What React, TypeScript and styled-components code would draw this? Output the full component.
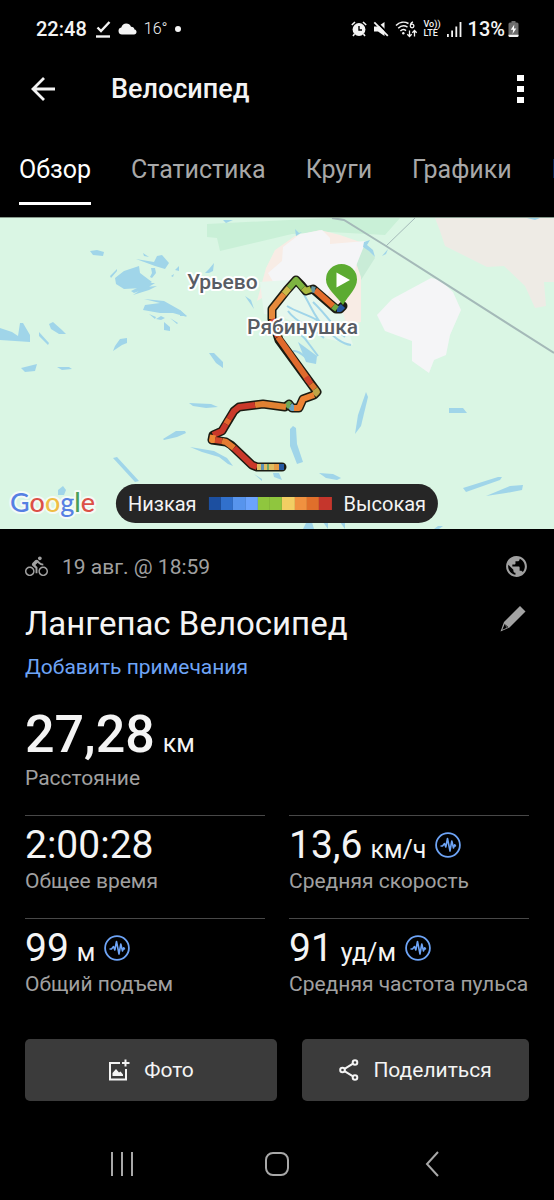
import React from "react";
import styled, { createGlobalStyle } from "styled-components";
import { MdDirectionsBike, MdPublic } from "react-icons/md";

const GlobalStyle = createGlobalStyle`
  *, *::before, *::after { box-sizing: border-box; }
  body {
    margin: 0;
    background: #000;
    color: #f4f4f4;
    font-family: Roboto, "Noto Sans", sans-serif;
  }
  h1, h2, p, dl, dd, dt { margin: 0; font-weight: 400; }
  button {
    border: 0;
    padding: 0;
    background: none;
    color: inherit;
    font: inherit;
    cursor: pointer;
  }
  svg { display: block; flex: none; }
`;

const Page = styled.div`
  display: flex;
  flex-direction: column;
  min-height: 100vh;
  overflow-x: hidden;
`;

/* ---------- status bar ---------- */

const StatusBar = styled.div`
  display: flex;
  justify-content: space-between;
  align-items: center;
  height: 58px;
  padding: 0 35px 0 36px;
`;

const StatusGroup = styled.div<{ $gap: number }>`
  display: flex;
  align-items: center;
  gap: ${(p) => p.$gap}px;
`;

const StatusText = styled.span`
  font-size: 20px;
  line-height: 24px;
  font-weight: 500;
`;

const Temperature = styled.span`
  font-size: 16px;
  line-height: 24px;
  font-weight: 300;
`;

const Dot = styled.span`
  width: 6px;
  height: 6px;
  border-radius: 50%;
  background: #f4f4f4;
`;

const Volte = styled.span`
  display: flex;
  flex-direction: column;
  font-size: 9px;
  line-height: 9px;
  font-weight: 500;
`;

const Charge = styled.span`
  display: flex;
  align-items: center;
  gap: 3px;
`;

/* ---------- header and tabs ---------- */

const AppBar = styled.header`
  display: flex;
  align-items: center;
  height: 62px;
  padding: 0 30px;
`;

const BackButton = styled.button`
  width: 81px;
`;

const AppTitle = styled.h1`
  flex: 1;
  font-size: 27px;
  line-height: 32px;
  font-weight: 500;
`;

const Tabs = styled.nav`
  display: flex;
  gap: 40px;
  height: 97px;
  padding: 35px 0 12px 19px;
  overflow: hidden;
`;

const Tab = styled.button<{ $active?: boolean }>`
  flex: none;
  padding-bottom: 17px;
  border-bottom: 3px solid ${(p) => (p.$active ? "#fff" : "transparent")};
  color: ${(p) => (p.$active ? "#fff" : "#a8a8a8")};
  font-size: 25px;
  line-height: 30px;
`;

/* ---------- map ---------- */

const MapPanel = styled.section`
  position: relative;
  height: 312px;
  border-top: 1px solid #87998c;
  background: #daf6e4;
  overflow: hidden;
`;

const MapDrawing = styled.svg`
  width: 100%;
  height: 100%;
`;

const PlaceName = styled.text`
  fill: #585c64;
  stroke: #fff;
  stroke-width: 4px;
  stroke-linejoin: round;
  paint-order: stroke;
  font-size: 21px;
  font-weight: 500;
`;

const GoogleMark = styled.text`
  stroke: #f4fbf6;
  stroke-width: 4px;
  stroke-linejoin: round;
  paint-order: stroke;
  font-family: Lato, Roboto, sans-serif;
  font-size: 27px;
  font-weight: 500;
`;

const Legend = styled.div`
  position: absolute;
  bottom: 6px;
  left: 50%;
  transform: translateX(-50%);
  display: flex;
  align-items: center;
  gap: 12px;
  height: 39px;
  padding: 0 12px;
  border-radius: 20px;
  background: #262626;
  font-size: 20px;
  line-height: 24px;
`;

const Scale = styled.div`
  display: flex;
  width: 123px;
  height: 13px;
`;

const Swatch = styled.span<{ $color: string }>`
  flex: 1;
  background: ${(p) => p.$color};
`;

/* ---------- activity details ---------- */

const Details = styled.main`
  padding: 0 25px;
`;

const MetaRow = styled.div`
  display: flex;
  align-items: center;
  gap: 14px;
  height: 75px;
  color: #a0a0a0;
  font-size: 21px;
  line-height: 24px;
`;

const MetaDate = styled.span`
  flex: 1;
`;

const TitleRow = styled.div`
  display: flex;
  justify-content: space-between;
  align-items: flex-start;
`;

const ActivityName = styled.h2`
  font-size: 33px;
  line-height: 40px;
`;

const NotesLink = styled.a`
  display: block;
  margin-top: 9px;
  color: #6ea4f6;
  font-size: 21px;
  line-height: 28px;
  text-decoration: none;
`;

const Distance = styled.dl`
  margin-top: 24px;
`;

const Stats = styled.dl`
  display: grid;
  grid-template-columns: 1fr 1fr;
  gap: 24px;
  margin-top: 24px;
`;

const Stat = styled.div`
  display: flex;
  flex-direction: column;
  min-width: 0;
  padding-top: 6px;
  border-top: 1px solid #484848;
`;

const StatLine = styled.dd`
  display: flex;
  align-items: center;
  gap: 9px;
  height: 46px;
`;

const Value = styled.span<{ $large?: boolean }>`
  font-size: ${(p) => (p.$large ? 52 : 39)}px;
  line-height: ${(p) => (p.$large ? 60 : 46)}px;
  font-weight: ${(p) => (p.$large ? 500 : 400)};
`;

const Unit = styled.span`
  margin-left: 8px;
  font-size: 25px;
  line-height: 32px;
  font-weight: 400;
`;

const Label = styled.dt`
  color: #a0a0a0;
  font-size: 21px;
  line-height: 26px;
  white-space: nowrap;
`;

const Actions = styled.div`
  display: grid;
  grid-template-columns: 10fr 9fr;
  gap: 25px;
  margin-top: 42px;
`;

const ActionButton = styled.button`
  display: flex;
  justify-content: center;
  align-items: center;
  gap: 14px;
  height: 62px;
  border-radius: 5px;
  background: #3b3b3b;
  font-size: 21px;
  line-height: 28px;
`;

/* ---------- system navigation ---------- */

const SystemNav = styled.nav`
  display: grid;
  grid-template-columns: repeat(3, 1fr);
  height: 72px;
  margin-top: auto;
  padding: 0 45px;
`;

const NavButton = styled.button`
  display: flex;
  justify-content: center;
  align-items: center;
`;

/* ---------- icons ---------- */

const ink = "#f4f4f4";

const CheckIcon = () => (
  <svg width="15" height="17" viewBox="0 0 15 17" fill="none" stroke={ink}>
    <path d="M1.5 6.5 5 10 13.5 1" strokeWidth="2.4" />
    <path d="M0 15.5h14" strokeWidth="2.4" />
  </svg>
);

const CloudIcon = () => (
  <svg width="19" height="12" viewBox="0 0 19 12" fill={ink}>
    <path d="M4 11.5a3.6 3.6 0 0 1-.7-7.1C4 1.800 6 .5 8.200 .5c2.300 0 4 1.200 4.800 3.200 2.200 0 3.300 1.300 3.500 2.900 1.500.3 2 1.300 2 2.400 0 1.500-1 2.500-2.500 2.500z" />
  </svg>
);

const AlarmIcon = () => (
  <svg width="16" height="16" viewBox="0 0 16 16" fill="none">
    <circle cx="8" cy="8.500" r="6.400" fill={ink} />
    <path d="M8 5v4h3" stroke="#000" strokeWidth="1.400" />
    <path d="M.8 4 4 1M15.200 4 12 1M3.500 13l-1.500 2M12.500 13l1.500 2" stroke={ink} strokeWidth="1.600" />
  </svg>
);

const MuteIcon = () => (
  <svg width="16" height="16" viewBox="0 0 16 16">
    <path d="M1 5.500h4L11.500 1v14L5 10.500H1z" fill={ink} />
    <path d="M2.500 0 16 13.500" stroke="#000" strokeWidth="2" />
    <path d="M1.300 1.300 14.800 14.800" stroke={ink} strokeWidth="1.800" />
  </svg>
);

const WifiIcon = () => (
  <svg width="23" height="17" viewBox="0 0 23 17" fill="none" stroke={ink} strokeWidth="1.500">
    <path d="M1 4.500C4.500 .8 9.500 .3 13.500 2.500M3.200 7.300c2.800-2.800 6.400-3 9.300-1.200M5.400 10c1.700-1.700 4-1.800 5.600-.4" />
    <circle cx="8.300" cy="12.300" r="1.200" fill={ink} stroke="none" />
    <path d="M18 .8c-2 .8-2.700 2.400-2.700 4.200a1.800 1.800 0 1 0 1.800-1.800c-.9 0-1.500.5-1.800 1.200" strokeWidth="1.300" />
    <path d="M14.500 9.500v6M12.300 13.200l2.200 2.300 2.200-2.300M19.500 15.500v-6M17.300 11.800l2.200-2.300 2.200 2.300" strokeWidth="1.300" />
  </svg>
);

const SignalIcon = () => (
  <svg width="15" height="15" viewBox="0 0 15 15" fill={ink}>
    <path d="M0 12h1.800v3H0zM4.200 8.500H6V15H4.200zM8.400 4.500h1.800V15H8.400zM12.600 0h1.800v15h-1.800z" />
  </svg>
);

const BatteryIcon = () => (
  <svg width="11" height="16" viewBox="0 0 11 16">
    <path d="M3.500 0h4v1.500H9A1.500 1.500 0 0 1 10.500 3v11.500A1.500 1.500 0 0 1 9 16H2a1.500 1.500 0 0 1-1.500-1.500V3A1.500 1.500 0 0 1 2 1.500h1.500z" fill="#6d6d6d" />
    <path d="M.5 13.800h10v.7A1.500 1.500 0 0 1 9 16H2a1.500 1.500 0 0 1-1.500-1.500z" fill={ink} />
    <path d="M6.300 3.500 2.800 8.800h2.400L4.500 13l3.800-5.600H5.900z" fill="#fff" />
  </svg>
);

const ArrowIcon = () => (
  <svg width="26" height="26" viewBox="0 0 26 26" fill="none" stroke={ink} strokeWidth="2.800">
    <path d="M25 13H3M14 2 3 13l11 11" />
  </svg>
);

const MoreIcon = () => (
  <svg width="7" height="28" viewBox="0 0 7 28" fill="#fff">
    <path d="M0 0h7v6H0zM0 11h7v6H0zM0 22h7v6H0z" />
  </svg>
);

const PencilIcon = () => (
  <svg width="29" height="30" viewBox="0 0 29 30">
    <path d="M20 2 25.500 7.500 9.500 23.500.5 27.500 4 18z" fill="#a3a3a3" />
    <path d="M4.800 19.800 8.300 23.300 2.300 25.800z" fill="#000" />
    <path d="M5 19.500 7 24" stroke="#a3a3a3" strokeWidth=".6" />
  </svg>
);

const PulseIcon = () => (
  <svg width="26" height="26" viewBox="0 0 26 26" fill="none" stroke="#6ea4f6">
    <circle cx="13" cy="13" r="11.900" strokeWidth="1.800" />
    <path d="M5.500 14h2l2-2.500 1.300 3.500L12.500 6.500 15 19l1.800-10 1.700 7 1.200-3.300 1 1.800" strokeWidth="1.600" strokeLinejoin="round" />
  </svg>
);

const PhotoIcon = () => (
  <svg width="22" height="22" viewBox="0 0 22 22" fill="none" stroke={ink} strokeWidth="2">
    <path d="M12 4H2v16.500h16V10" />
    <path d="M17.500 .5v7M14 4h7.500" />
    <path d="M4.500 17v-3l3.500-4 3 3.500 1.500-1L15 15.500V17z" fill={ink} stroke="none" />
  </svg>
);

const ShareIcon = () => (
  <svg width="20" height="22" viewBox="0 0 20 22" fill="none" stroke={ink} strokeWidth="2">
    <circle cx="3.500" cy="11" r="2.300" />
    <circle cx="16" cy="3.500" r="2.300" />
    <circle cx="16" cy="18.500" r="2.300" />
    <path d="M5.500 9.800 14 4.700M5.500 12.200 14 17.300" />
  </svg>
);

/* ---------- map data ---------- */

const water = [
  "M90 33l7-1 7 2-1 4-10-1z",
  "M115 60l9-7 15-5 1 7 12 9-10 6-18 1-8-5z",
  "M136 41l18 3 3-6 5-1 7 8-4 6-10-3z",
  "M110 58l7-7v2l-6 7zM143 35l6 4-5-1zM151 50h4l1 5-4 5-2-1 2-4zM175 52l4-4v5zM171 58l3-2-1 3z",
  "M131 73l16-8 8 0-8 5-13 5zM133 77l12-8 12-1-8 4z",
  "M144 81l20 2 16 9 7 7-14-4-13 0-17-3 2-5 15-2z",
  "M149 96l7 3-1 2zM156 101l5-3 4 2-4 2zM170 100l8 5-1 1zM164 104l6 5v4l-6-1z",
  "M0 110l12 4 6 4 2-13h3l7 12v7L0 122z",
  "M49 106l4-2 9 8 4 4-7 0-8-5zM39 114l10 11-1 2-9-9z",
  "M120 121l7-1v5l-5 2-9 6 2-5zM21 150l16-4-2 7-10 1z",
  "M209 51l5-6-1 8-4 2-4 0zM223 2l10 0-7 3zM245 78l6 4 3 9zM180 92l7 6h-7zM209 135l5 0 9 9 0 6-7-5z",
  "M295 11l4 4 3-1-6 4zM364 24l6-2-3 5 6 5 2 7-6-6-6-4zM382 38l6-7-2 5z",
  "M189 185l22 1 7 3-12 1-13-2zM163 221l13-8 9 0 1 2-9 4-13 3z",
  "M190 229l24 4 13 7 6 8-5-2-9-7-17-5z",
  "M113 240l4-1 22 24-4 1z",
  "M290 211l3-3 3 2 1 16 6 18-6 2-7-18z",
  "M366 174l2 5-7 29-6 8 3-19z",
  "M319 255l14 1 8 4-4 2-11-2zM449 190h14l4 5h-18z",
  "M463 270l35-11 4 0-2 3-34 12zM486 278l24-10 13-1-1 5-16 3z",
  "M254 256l8 5v2zM273 255l6 0 3 7-8-3zM303 311l3-6 6-1 2 7zM323 304h5v7zM340 304h5v7z",
  "M57 149h12l3 2-10 1zM434 311l4-3 5 0-4 3zM58 272l5-4 3 4-2 5-6 0zM527 0h13l-5 2z",
];

const creeks = [
  "M287 88c13 8 31 11 38 21s18 17 26 18M288 93c8 12 24 16 36 27M303 75c9 15 12 25 22 35M280 103c11 7 22 12 29 23l9 12M313 84c16 15 23 29 32 35",
  "M293 133c7-1 12 7 19 11",
];

const route =
  "M343 88L340 91L336 91L313 71L306 73L301 67L296 62L287 72L272 91L272 101L279 122L317 174L314 177L303 181L299 190L292 190L289 186L285 189L263 186L239 189L234 193L222 213L213 217L212 222L226 224L231 227L252 247L257 249L282 249";

const routeParts: [string, string][] = [
  ["#25579f", "M343 88L340 91L337 91"],
  ["#70a943", "M337 91L333 88"],
  ["#e46c2c", "M333 88L315 72"],
  ["#6193a0", "M315 72L311 71"],
  ["#a9b83f", "M311 71L306 73L303 70"],
  ["#7db441", "M303 70L296 62L289 70"],
  ["#cbb948", "M289 70L284 76"],
  ["#e78a3c", "M284 76L272 91L272 101"],
  ["#d84e2d", "M272 101L278 119"],
  ["#e06a2d", "M278 119L309 163"],
  ["#cf432c", "M306 159L311 166"],
  ["#dd742d", "M311 166L315 171"],
  ["#bfa546", "M315 171L317 174L314 177"],
  ["#ed8334", "M314 177L303 181L299 190L294 190"],
  ["#6aa4c4", "M294 190L292 190L290 187"],
  ["#6fa858", "M290 187L289 186L286 189"],
  ["#e18132", "M286 189L263 186L255 187"],
  ["#ca382a", "M255 187L239 189L234 193L229 201"],
  ["#e3652d", "M229 201L226 206"],
  ["#ca382a", "M226 206L222 213L213 217"],
  ["#ed8734", "M213 217L212 222L215 222"],
  ["#d3482b", "M215 222L222 223"],
  ["#e57b31", "M222 223L226 224L234 230"],
  ["#ca382a", "M234 230L252 247L257 249"],
  ["#dfbd61", "M257 249L274 249"],
  ["#5c91b4", "M261 249L264 249"],
  ["#6ea66b", "M267 249L269 249"],
  ["#e69b45", "M274 249L279 249"],
  ["#25579f", "M279 249L284 249"],
];

const scaleColors = [
  "#1c4fa0", "#3170cc", "#5794ed", "#6ba3fd", "#8fc63e",
  "#8fc63e", "#f2ce63", "#f09140", "#e06f2b", "#c5362c",
];

const googleLetters: [string, string][] = [
  ["G", "#5680e3"], ["o", "#dc5047"], ["o", "#efbd45"],
  ["g", "#5680e3"], ["l", "#49a05a"], ["e", "#dc5047"],
];

const ActivityMap = () => (
  <MapDrawing viewBox="0 0 554 311" preserveAspectRatio="xMidYMid slice" role="img" aria-label="Карта маршрута">
    <path d="M207 6L330 0H400L385 17 330 14 292 16 220 33 217 20 207 19z" fill="#c9f0d7" />
    <path d="M366 27l9 13-14 22-10 4 4-27z" fill="#c9ecd7" />
    <path d="M266 50l9-18 20-14 25-6 20 5 23 8-7 20 5 14v45l-20 4-34-27-35-7-15 9z" fill="#f8ece5" />
    <path d="M283 29l17-13 22-4 8 8 0 6 36-3-10 25-3 13-20 4-10 22-28-16-20-4-7-12 14-12z" fill="#f5f5f7" />
    <path d="M260 64l28-2 19 10 36 23 10 32-32-8-38-20-19-3z" fill="#e6f7ed" />
    <path d="M431 60l9 2 13 12 8 18-11 25-4 20-12 5-5 13-17-12v-20l-27-10-8-16 15-16z" fill="#f5f5f7" />
    <path d="M435 0H554V64h-10l2 24-11 2-10-22-21-20-17 1-42-21-5-15z" fill="#eeebe5" />
    <g fill="#a0d5e9">{water.map((d) => <path key={d} d={d} />)}</g>
    <g fill="none" stroke="#a0d5e9" strokeWidth="2">{creeks.map((d) => <path key={d} d={d} />)}</g>
    <path d="M298 124l19 14-1 8-10-2z" fill="#a0d5e9" />
    <g fill="none" stroke="#a4b9b8">
      <path d="M332 0l12 2 42 26L554 135" strokeWidth="2" />
      <path d="M386 28L415 0" strokeWidth="1" />
    </g>
    <g fill="none" strokeLinejoin="round">
      <path d={route} stroke="#1b1b12" strokeWidth="9" strokeLinecap="round" />
      {routeParts.map(([color, d]) => (
        <path key={d} d={d} stroke={color} strokeWidth="6" />
      ))}
    </g>
    <PlaceName x="187" y="71">Урьево</PlaceName>
    <PlaceName x="247" y="116">Рябинушка</PlaceName>
    <path d="M341.500 46a15.500 15.500 0 0 1 15.500 15.500c0 9-8 15-14 25.500-7-10-17-16-17-25.500A15.500 15.500 0 0 1 341.500 46z" fill="#5cab31" />
    <path d="M336.500 54.500v15l13.500-7.500z" fill="#fff" />
    <GoogleMark x="10" y="294">
      {googleLetters.map(([letter, color], i) => (
        <tspan key={i} fill={color}>{letter}</tspan>
      ))}
    </GoogleMark>
  </MapDrawing>
);

interface StatData {
  value: string;
  unit?: string;
  label: string;
  chart?: boolean;
}

const stats: StatData[] = [
  { value: "2:00:28", label: "Общее время" },
  { value: "13,6", unit: "км/ч", label: "Средняя скорость", chart: true },
  { value: "99", unit: "м", label: "Общий подъем", chart: true },
  { value: "91", unit: "уд/м", label: "Средняя частота пульса", chart: true },
];

const tabs = ["Обзор", "Статистика", "Круги", "Графики", "Принадлежности"];

export default function App() {
  return (
    <Page>
      <GlobalStyle />
      <StatusBar>
        <StatusGroup $gap={9}>
          <StatusText>22:48</StatusText>
          <StatusGroup $gap={7}>
            <CheckIcon />
            <CloudIcon />
            <Temperature>16°</Temperature>
            <Dot />
          </StatusGroup>
        </StatusGroup>
        <StatusGroup $gap={6}>
          <AlarmIcon />
          <MuteIcon />
          <WifiIcon />
          <Volte>
            <span>Vo))</span>
            <span>LTE</span>
          </Volte>
          <SignalIcon />
          <Charge>
            <StatusText>13%</StatusText>
            <BatteryIcon />
          </Charge>
        </StatusGroup>
      </StatusBar>

      <AppBar>
        <BackButton aria-label="Назад"><ArrowIcon /></BackButton>
        <AppTitle>Велосипед</AppTitle>
        <button aria-label="Меню"><MoreIcon /></button>
      </AppBar>

      <Tabs>
        {tabs.map((name, i) => (
          <Tab key={name} $active={i === 0}>{name}</Tab>
        ))}
      </Tabs>

      <MapPanel>
        <ActivityMap />
        <Legend>
          <span>Низкая</span>
          <Scale>
            {scaleColors.map((color, i) => <Swatch key={i} $color={color} />)}
          </Scale>
          <span>Высокая</span>
        </Legend>
      </MapPanel>

      <Details>
        <MetaRow>
          <MdDirectionsBike size={23} />
          <MetaDate>19 авг. @ 18:59</MetaDate>
          <MdPublic size={25} />
        </MetaRow>
        <TitleRow>
          <ActivityName>Лангепас Велосипед</ActivityName>
          <button aria-label="Изменить название"><PencilIcon /></button>
        </TitleRow>
        <NotesLink href="#notes">Добавить примечания</NotesLink>

        <Distance>
          <dd>
            <Value $large>27,28<Unit>км</Unit></Value>
          </dd>
          <Label>Расстояние</Label>
        </Distance>

        <Stats>
          {stats.map((s) => (
            <Stat key={s.label}>
              <StatLine>
                <Value>
                  {s.value}
                  {s.unit && <Unit>{s.unit}</Unit>}
                </Value>
                {s.chart && <button aria-label={`График: ${s.label}`}><PulseIcon /></button>}
              </StatLine>
              <Label>{s.label}</Label>
            </Stat>
          ))}
        </Stats>

        <Actions>
          <ActionButton><PhotoIcon />Фото</ActionButton>
          <ActionButton><ShareIcon />Поделиться</ActionButton>
        </Actions>
      </Details>

      <SystemNav>
        <NavButton aria-label="Недавние приложения">
          <svg width="24" height="26" viewBox="0 0 24 26" stroke="#a8a8a8" strokeWidth="2">
            <path d="M2 1v24M12 1v24M22 1v24" />
          </svg>
        </NavButton>
        <NavButton aria-label="Главный экран">
          <svg width="26" height="26" viewBox="0 0 26 26" fill="none" stroke="#a8a8a8" strokeWidth="2">
            <rect x="2" y="2" width="22" height="22" rx="7" />
          </svg>
        </NavButton>
        <NavButton aria-label="Назад">
          <svg width="14" height="26" viewBox="0 0 14 26" fill="none" stroke="#a8a8a8" strokeWidth="2">
            <path d="M13 1 2 13l11 12" />
          </svg>
        </NavButton>
      </SystemNav>
    </Page>
  );
}
